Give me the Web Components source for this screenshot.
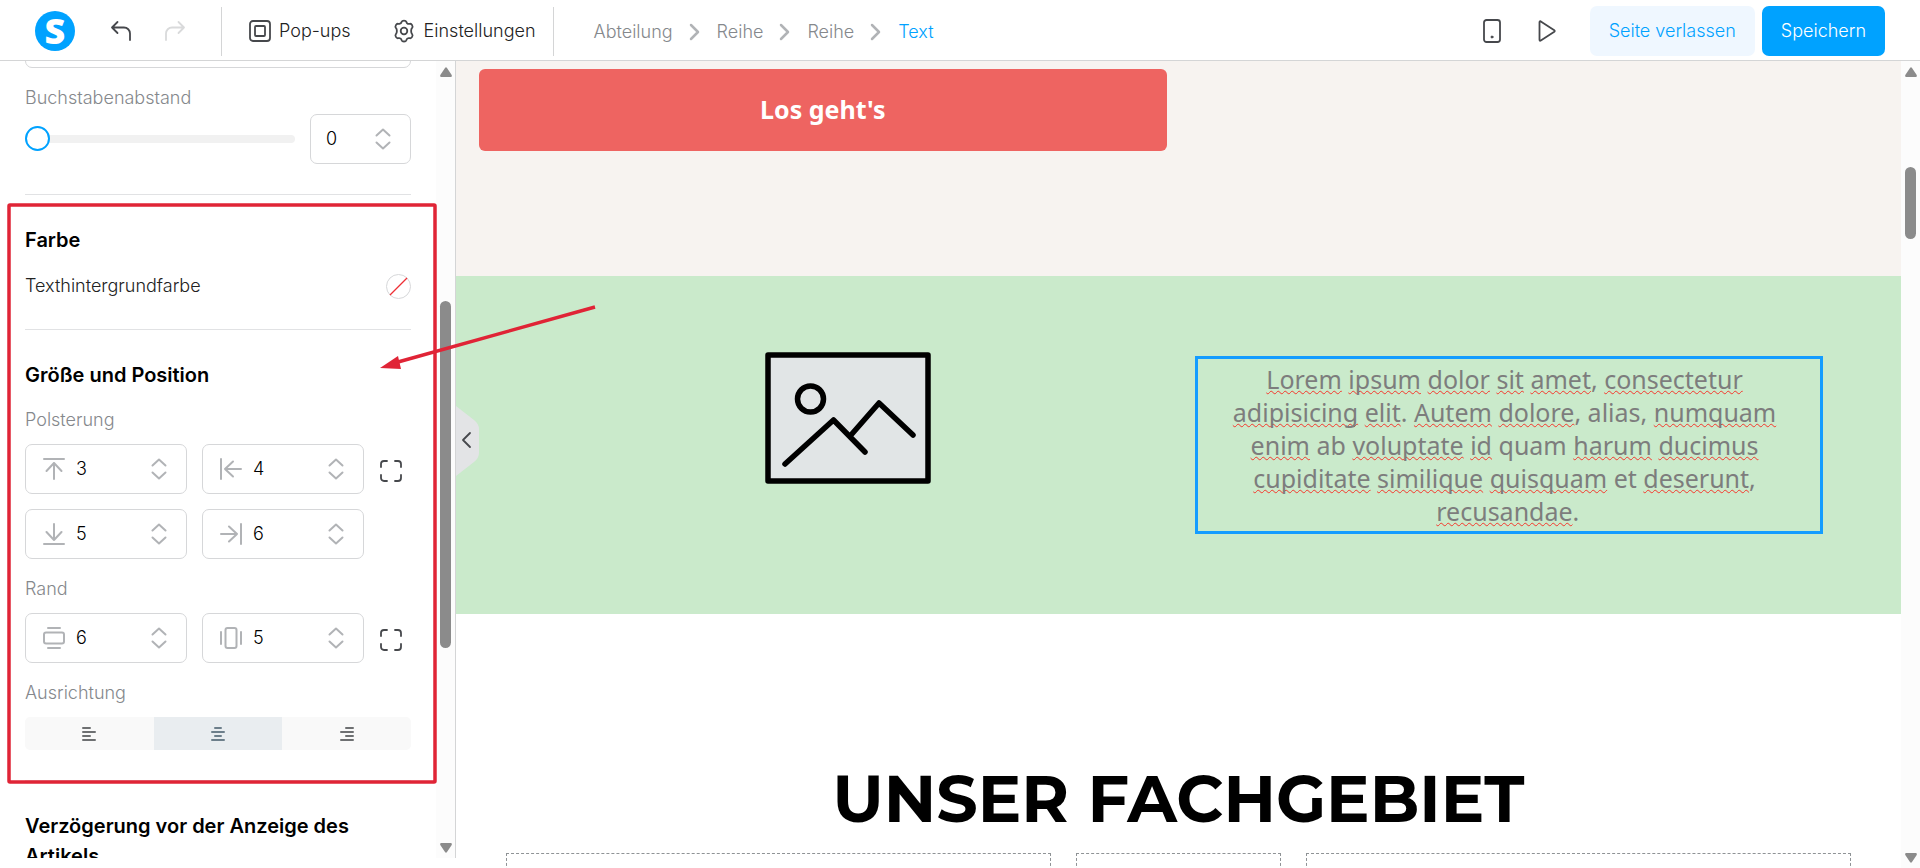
<!DOCTYPE html>
<html lang="de">
<head>
<meta charset="UTF-8">
<meta name="viewport" content="width=device-width, initial-scale=1.0">
<title>Seiteneditor</title>
<style>
	html, body {
		height: 100%;
		margin: 0;
	}

	body {
		background: #fff;
		font-family: Inter, "Liberation Sans", sans-serif;
		font-size: 18px;
		font-weight: 300;
		line-height: 20px;
		color: #222;
		overflow: hidden;
	}
</style>
</head>
<body>
<page-editor></page-editor>

<script>
/* ---------- icons ---------- */
const icons = {
	undo: [22, 22, '<path d="M7.500 2 2 7.500l5.500 5.500M2 7.500h12a6 6 0 0 1 6 6V20"/>'],
	redo: [22, 22, '<path d="M14.500 2 20 7.500 14.500 13M20 7.500H8a6 6 0 0 0-6 6V20"/>'],
	popup: [22, 22, '<rect x="1" y="1" width="20" height="20" rx="3"/><rect x="6" y="6" width="10" height="10" rx="1"/>'],
	gear: [24, 24, '<circle cx="12" cy="12" r="3.300"/><path d="M9.700 2.800c.5-1.700 4.100-1.700 4.600 0 .5 1.900 1.600 2.500 3.500 2 1.800-.5 3.600 2.600 2.300 4-1.300 1.300-1.300 5.100 0 6.400 1.300 1.400-.5 4.500-2.300 4-1.900-.5-3 .1-3.500 2-.5 1.700-4.100 1.700-4.600 0-.5-1.900-1.600-2.500-3.500-2-1.800.5-3.600-2.600-2.300-4 1.300-1.300 1.300-5.100 0-6.400-1.300-1.400.5-4.500 2.300-4 1.900.5 3-.1 3.500-2z"/>'],
	phone: [18, 24, '<rect x="1" y="1" width="16" height="22" rx="2.500"/><circle cx="9" cy="18" r="1" fill="currentColor" stroke-width="1"/>'],
	play: [18, 22, '<path d="M1.500 2.200c0-1 .6-1.200 1.300-.8l13.500 8.800c.6.400.6 1 0 1.500L2.800 20.500c-.7.500-1.300.2-1.300-.7z"/>'],
	crumb: [12, 18, '<path d="m2 2 7 7-7 7" stroke-width="2.500"/>'],
	up: [16, 9, '<path d="m1.500 7.500 6.500-6 6.500 6"/>'],
	down: [16, 9, '<path d="m1.500 1.500 6.500 6 6.500-6"/>'],
	padTop: [22, 22, '<path d="M1 1h20M11 21V5M3.500 13 11 5l7.500 8"/>'],
	padBottom: [22, 22, '<path d="M1 21h20M11 1v16M3.500 9l7.500 8 7.500-8"/>'],
	padLeft: [22, 22, '<path d="M1 1v20M21 11H5M13 3.500 5 11l8 7.500"/>'],
	padRight: [22, 22, '<path d="M21 1v20M1 11h16M9 3.500l8 7.500-8 7.500"/>'],
	marginY: [22, 22, '<path d="M5 1h12M5 21h12"/><rect x="1" y="5.500" width="20" height="11" rx="2"/>'],
	marginX: [22, 22, '<path d="M1 5v12M21 5v12"/><rect x="5.500" y="1" width="11" height="20" rx="2"/>'],
	corners: [22, 22, '<path d="M1 7V4a3 3 0 0 1 3-3h3M15 1h3a3 3 0 0 1 3 3v3M21 15v3a3 3 0 0 1-3 3h-3M7 21H4a3 3 0 0 1-3-3v-3"/>'],
	alignLeft: [14, 14, '<path d="M1 1h7M1 5h12M1 9h7M1 13h12"/>'],
	alignCenter: [14, 14, '<path d="M4 1h6M1 5h12M4 9h6M1 13h12"/>'],
	alignRight: [14, 14, '<path d="M6 1h7M1 5h12M6 9h7M1 13h12"/>']
};

class UiIcon extends HTMLElement {
	connectedCallback() {
		const [w, h, shape] = icons[this.getAttribute('name')];
		this.attachShadow({ mode: 'open' }).innerHTML = `
			<style>
				:host { display: inline-flex; flex: none; }
				svg { display: block; overflow: visible; stroke-width: var(--stroke, 1.8); }
			</style>
			<svg width="${w}" height="${h}" viewBox="0 0 ${w} ${h}" fill="none" stroke="currentColor"
				stroke-linecap="round" stroke-linejoin="round" aria-hidden="true">${shape}</svg>
		`;
	}
}
customElements.define('ui-icon', UiIcon);

/* ---------- scrollbar: before / size / after are shares of the track ---------- */
class ScrollRail extends HTMLElement {
	connectedCallback() {
		const rows = ['before', 'size', 'after'].map(n => this.getAttribute(n) + 'fr').join(' ');
		this.attachShadow({ mode: 'open' }).innerHTML = `
			<style>
				:host {
					display: flex;
					flex-direction: column;
					align-items: center;
					flex: none;
					width: 19px;
					padding: 6px 0 5px;
					box-sizing: border-box;
					background: #fcfcfc;
				}
				svg { display: block; flex: none; fill: #8b8b8b; }
				.track {
					flex: 1;
					display: grid;
					grid-template-rows: ${rows};
					width: 11px;
					margin: 4px 0 5px;
				}
				.thumb { grid-row: 2; border-radius: 6px; background: #8b8b8b; }
			</style>
			<svg width="12" height="10" viewBox="0 0 12 10"><path d="M5 1q1-1.500 2 0l4.700 7q.6 2-1 2H1.300q-1.600 0-1-2z"/></svg>
			<div class="track"><div class="thumb"></div></div>
			<svg width="12" height="10" viewBox="0 0 12 10"><path d="M5 9q1 1.500 2 0l4.700-7q.6-2-1-2H1.300q-1.600 0-1 2z"/></svg>
		`;
	}
}
customElements.define('scroll-rail', ScrollRail);

/* ---------- number field ---------- */
class NumberField extends HTMLElement {
	connectedCallback() {
		const icon = this.getAttribute('icon');
		const label = this.getAttribute('label');
		this.attachShadow({ mode: 'open' }).innerHTML = `
			<style>
				:host {
					display: flex;
					align-items: center;
					gap: 11px;
					height: 50px;
					min-width: 0;
					padding: 0 19px 0 ${icon ? 17 : 15}px;
					box-sizing: border-box;
					border: 1px solid #d6d7d9;
					border-radius: 7px;
					background: #fff;
				}
				ui-icon { --stroke: 2; color: #b1b3b6; }
				input {
					flex: 1;
					width: 0;
					min-width: 0;
					padding: 0;
					border: 0;
					outline: 0;
					background: none;
					font: inherit;
					color: #000;
					appearance: textfield;
				}
				input::-webkit-inner-spin-button { display: none; }
				.steps { display: flex; flex-direction: column; gap: 4px; }
				button { display: flex; padding: 0; border: 0; background: none; cursor: pointer; }
			</style>
			${icon ? `<ui-icon name="${icon}"></ui-icon>` : ''}
			<input type="number" value="${this.getAttribute('value')}" aria-label="${label}">
			<div class="steps">
				<button aria-label="${label} erhöhen"><ui-icon name="up"></ui-icon></button>
				<button aria-label="${label} verringern"><ui-icon name="down"></ui-icon></button>
			</div>
		`;
		const input = this.shadowRoot.querySelector('input');
		const [up, down] = this.shadowRoot.querySelectorAll('button');
		up.addEventListener('click', () => input.stepUp());
		down.addEventListener('click', () => input.stepDown());
	}
}
customElements.define('number-field', NumberField);

/* ---------- top bar ---------- */
const headerTemplate = document.createElement('template');
headerTemplate.innerHTML = `
	<style>
		:host {
			display: flex;
			align-items: center;
			flex: none;
			height: 61px;
			padding: 2px 35px 0;
			box-sizing: border-box;
			border-bottom: 1px solid #d4d5d6;
			background: #fff;
		}

		button {
			display: flex;
			align-items: center;
			padding: 0;
			border: 0;
			background: none;
			font: inherit;
			color: #222;
			cursor: pointer;
		}

		ui-icon {
			color: #46484c;
		}

		.logo {
			display: flex;
			align-items: center;
			justify-content: center;
			width: 40px;
			height: 40px;
			border-radius: 50%;
			background: #00a2ff;
			font: 800 36px/40px "Open Sans", sans-serif;
			color: #fff;
			text-decoration: none;
		}

		.history {
			display: flex;
			gap: 32px;
			padding: 0 35px;
		}

		.history button:disabled ui-icon {
			color: #d9dadb;
		}

		.tools {
			display: flex;
			align-items: center;
			gap: 41px;
			height: 49px;
			padding: 0 17px 0 27px;
			border: solid #d4d5d6;
			border-width: 0 1px;
		}

		.tools button {
			gap: 8px;
		}

		nav {
			display: flex;
			align-items: center;
			gap: 16px;
			padding: 2px 40px 0;
		}

		nav a {
			color: #85888c;
			text-decoration: none;
		}

		nav a[aria-current] {
			color: #00a2ff;
		}

		nav ui-icon {
			color: #b1b3b6;
		}

		.actions {
			display: flex;
			align-items: center;
			gap: 7px;
			margin-left: auto;
		}

		.preview {
			display: flex;
			align-items: center;
			gap: 37px;
			margin-right: 27px;
		}

		.leave,
		.save {
			height: 50px;
			padding: 0 19px;
			border-radius: 7px;
			background: #eff7ff;
			color: #00a2ff;
		}

		.save {
			background: #00a2ff;
			color: #fff;
		}
	</style>

	<a href="#" class="logo" aria-label="Startseite">S</a>
	<div class="history">
		<button aria-label="Rückgängig"><ui-icon name="undo"></ui-icon></button>
		<button aria-label="Wiederholen" disabled><ui-icon name="redo"></ui-icon></button>
	</div>
	<div class="tools">
		<button><ui-icon name="popup"></ui-icon>Pop-ups</button>
		<button><ui-icon name="gear"></ui-icon>Einstellungen</button>
	</div>
	<nav>
		<a href="#">Abteilung</a>
		<ui-icon name="crumb"></ui-icon>
		<a href="#">Reihe</a>
		<ui-icon name="crumb"></ui-icon>
		<a href="#">Reihe</a>
		<ui-icon name="crumb"></ui-icon>
		<a href="#" aria-current="page">Text</a>
	</nav>
	<div class="actions">
		<div class="preview">
			<button aria-label="Mobile Ansicht"><ui-icon name="phone"></ui-icon></button>
			<button aria-label="Vorschau"><ui-icon name="play"></ui-icon></button>
		</div>
		<button class="leave">Seite verlassen</button>
		<button class="save">Speichern</button>
	</div>
`;

class EditorHeader extends HTMLElement {
	connectedCallback() {
		this.attachShadow({ mode: 'open' })
			.appendChild(headerTemplate.content.cloneNode(true));
	}
}
customElements.define('editor-header', EditorHeader);

/* ---------- settings section ---------- */
const sectionTemplate = document.createElement('template');
sectionTemplate.innerHTML = `
	<style>
		:host {
			display: block;
			padding: 30px 0;
			border-top: 1px solid #e1e2e4;
		}

		h2 {
			margin: 0;
			font-size: 20px;
			font-weight: 600;
			line-height: 30px;
			color: #000;
		}
	</style>
	<h2><slot name="title"></slot></h2>
	<slot></slot>
`;

class SettingsSection extends HTMLElement {
	connectedCallback() {
		this.attachShadow({ mode: 'open' })
			.appendChild(sectionTemplate.content.cloneNode(true));
	}
}
customElements.define('settings-section', SettingsSection);

/* ---------- left panel ---------- */
const sidebarTemplate = document.createElement('template');
sidebarTemplate.innerHTML = `
	<style>
		:host {
			display: flex;
			flex: none;
			width: 456px;
			margin-bottom: 10px;
			box-sizing: border-box;
			border-right: 1px solid #d4d5d6;
			background: #fff;
			overflow: hidden;
		}

		.panel {
			flex: 1;
			min-width: 0;
			padding: 0 25px;
			overflow: hidden;
		}

		/* field scrolled out at the top, only its lower edge stays visible */
		.previous {
			height: 50px;
			margin-top: -43px;
			box-sizing: border-box;
			border: 1px solid #d6d7d9;
			border-radius: 7px;
		}

		.label {
			display: block;
			margin: 20px 0 14px;
			color: #85888c;
		}

		.spacing .label {
			margin-bottom: 6px;
		}

		.spacing {
			padding-bottom: 30px;
		}

		.slider {
			display: flex;
			align-items: center;
			gap: 15px;
		}

		.slider number-field {
			width: 101px;
		}

		input[type="range"] {
			flex: 1;
			min-width: 0;
			height: 26px;
			margin: 0;
			appearance: none;
			background: none;
		}

		input[type="range"]::-webkit-slider-runnable-track {
			height: 8px;
			border-radius: 4px;
			background: #f1f1f1;
		}

		input[type="range"]::-webkit-slider-thumb {
			appearance: none;
			width: 25px;
			height: 25px;
			margin-top: -9px;
			box-sizing: border-box;
			border: 2px solid #00a2ff;
			border-radius: 50%;
			background: #fff;
		}

		.color {
			display: flex;
			align-items: center;
			justify-content: space-between;
			height: 26px;
			margin-top: 18px;
		}

		.swatch {
			display: flex;
			padding: 0;
			border: 0;
			background: none;
		}

		.fields {
			display: grid;
			grid-template-columns: 1fr 1fr 32px;
			gap: 15px;
		}

		.link {
			display: flex;
			align-items: center;
			padding: 4px 0 0 1px;
			border: 0;
			background: none;
			color: #46484c;
		}

		.align {
			display: flex;
			height: 33px;
			border-radius: 5px;
			background: #f9f9f9;
			overflow: hidden;
		}

		.align button {
			--stroke: 2;
			flex: 1;
			display: flex;
			align-items: center;
			justify-content: center;
			border: 0;
			background: none;
			color: #6e7072;
		}

		.align button[aria-pressed="true"] {
			background: #e9edf0;
			color: #6d7f8b;
		}
	</style>

	<div class="panel">
		<div class="previous"></div>
		<div class="spacing">
			<label class="label" for="spacing">Buchstabenabstand</label>
			<div class="slider">
				<input type="range" id="spacing" min="0" max="20" value="0">
				<number-field value="0" label="Buchstabenabstand"></number-field>
			</div>
		</div>

		<settings-section>
			<span slot="title">Farbe</span>
			<div class="color">
				<span id="bg">Texthintergrundfarbe</span>
				<button class="swatch" aria-labelledby="bg">
					<svg width="25" height="25" viewBox="0 0 25 25" fill="none">
						<circle cx="12.500" cy="12.500" r="12" fill="#fff" stroke="#d6d7d9"/>
						<path d="M4 21 21 4" stroke="#ee2f35" stroke-width="1.300"/>
					</svg>
				</button>
			</div>
		</settings-section>

		<settings-section>
			<span slot="title">Größe und Position</span>
			<span class="label">Polsterung</span>
			<div class="fields">
				<number-field icon="padTop" value="3" label="Polsterung oben"></number-field>
				<number-field icon="padLeft" value="4" label="Polsterung links"></number-field>
				<button class="link" aria-label="Polsterung verknüpfen"><ui-icon name="corners"></ui-icon></button>
				<number-field icon="padBottom" value="5" label="Polsterung unten"></number-field>
				<number-field icon="padRight" value="6" label="Polsterung rechts"></number-field>
			</div>
			<span class="label">Rand</span>
			<div class="fields">
				<number-field icon="marginY" value="6" label="Rand vertikal"></number-field>
				<number-field icon="marginX" value="5" label="Rand horizontal"></number-field>
				<button class="link" aria-label="Rand verknüpfen"><ui-icon name="corners"></ui-icon></button>
			</div>
			<span class="label">Ausrichtung</span>
			<div class="align">
				<button aria-label="Links" aria-pressed="false"><ui-icon name="alignLeft"></ui-icon></button>
				<button aria-label="Zentriert" aria-pressed="true"><ui-icon name="alignCenter"></ui-icon></button>
				<button aria-label="Rechts" aria-pressed="false"><ui-icon name="alignRight"></ui-icon></button>
			</div>
		</settings-section>

		<settings-section>
			<span slot="title">Verzögerung vor der Anzeige des Artikels</span>
		</settings-section>
	</div>
	<scroll-rail before="220" size="347" after="190"></scroll-rail>
`;

class SettingsSidebar extends HTMLElement {
	connectedCallback() {
		this.attachShadow({ mode: 'open' })
			.appendChild(sidebarTemplate.content.cloneNode(true));
	}
}
customElements.define('settings-sidebar', SettingsSidebar);

/* ---------- page preview ---------- */
const canvasTemplate = document.createElement('template');
canvasTemplate.innerHTML = `
	<style>
		:host {
			display: flex;
			flex: 1;
			min-width: 0;
			position: relative;
			overflow: hidden;
			font-family: "Noto Sans", sans-serif;
			font-weight: 400;
		}

		.page {
			flex: 1;
			min-width: 0;
			overflow: hidden;
		}

		.hero {
			display: grid;
			grid-template-columns: 1fr 1fr;
			gap: 25px;
			padding: 8px 22px 125px 23px;
			background: #f7f3f0;
		}

		.cta {
			padding: 23px 24px 25px;
			border-radius: 6px;
			background: #ee6461;
			font-size: 25px;
			font-weight: 700;
			line-height: 34px;
			color: #fff;
			text-align: center;
			text-decoration: none;
		}

		.intro {
			display: grid;
			grid-template-columns: 12fr 11fr;
			align-items: start;
			gap: 4px;
			padding: 76px 78px 80px 49px;
			background: #caeacb;
		}

		.intro svg {
			display: block;
			justify-self: center;
		}

		.intro p {
			margin: 4px 0 0;
			padding: 4px 32px 3px 30px;
			border: 3px solid #149dff;
			font-size: 25px;
			line-height: 33px;
			color: #7d7d7d;
			text-align: center;
			white-space: break-spaces;
		}

		.intro u {
			text-decoration: underline wavy 1px #f5372c;
			text-decoration-skip-ink: none;
			text-underline-offset: 1px;
		}

		.topics {
			padding: 145px 50px 0;
			background: #fff;
		}

		h1 {
			margin: 0 0 14px;
			font: 700 65px/80px Montserrat, Inter, sans-serif;
			color: #000;
			text-align: center;
		}

		.cards {
			display: grid;
			grid-template-columns: 8fr 3fr 8fr;
			gap: 25px;
		}

		.cards div {
			height: 200px;
			border: 1px dashed #8f9396;
		}

		/* handle that lies over the preview's left edge */
		.collapse {
			position: absolute;
			left: 0;
			top: 345px;
			padding: 0;
			border: 0;
			background: none;
			color: #46484c;
		}

		.collapse svg {
			display: block;
		}
	</style>

	<div class="page">
		<section class="hero">
			<a href="#" class="cta">Los geht's</a>
		</section>
		<section class="intro">
			<svg width="166" height="132" viewBox="0 0 166 132" fill="none" stroke="#000" stroke-width="5.500" stroke-linecap="round" stroke-linejoin="round">
				<rect x="3" y="3" width="160" height="126" fill="#e1e5e6"/>
				<circle cx="45.500" cy="47" r="13"/>
				<path d="M20 112 68.500 68 100 100M86 83l28-32 34 32"/>
			</svg>
			<p><u>Lorem</u> <u>ipsum</u> <u>dolor</u> <u>sit</u> <u>amet</u>, <u>consectetur</u> <u>adipisicing</u> <u>elit</u>. <u>Autem</u> <u>dolore</u>, alias, <u>numquam</u> <u>enim</u> ab <u>voluptate</u> <u>id</u> quam <u>harum</u> <u>ducimus</u> <u>cupiditate</u> <u>similique</u> <u>quisquam</u> et <u>deserunt</u>, <u>recusandae</u>.</p>
		</section>
		<section class="topics">
			<h1>UNSER FACHGEBIET</h1>
			<div class="cards"><div></div><div></div><div></div></div>
		</section>
	</div>
	<scroll-rail before="86" size="72" after="609"></scroll-rail>
	<button class="collapse" aria-label="Leiste einklappen">
		<svg width="23" height="70" viewBox="0 0 23 70" fill="none">
			<path d="M0 0 18 14q5 4 5 9v24q0 5-5 9L0 70z" fill="#e3e4e6"/>
			<path d="m14 27-7 7 7 7" stroke="currentColor" stroke-width="1.800" stroke-linecap="round" stroke-linejoin="round"/>
		</svg>
	</button>
`;

class PageCanvas extends HTMLElement {
	connectedCallback() {
		this.attachShadow({ mode: 'open' })
			.appendChild(canvasTemplate.content.cloneNode(true));
	}
}
customElements.define('page-canvas', PageCanvas);

/* ---------- red frame and arrow drawn over the editor ---------- */
class MarkerOverlay extends HTMLElement {
	connectedCallback() {
		this.attachShadow({ mode: 'open' }).innerHTML = `
			<style>
				:host {
					display: block;
					position: absolute;
					left: 0;
					top: 0;
					pointer-events: none;
				}
				svg { display: block; }
			</style>
			<svg width="620" height="800" viewBox="0 0 620 800" fill="none" stroke="#e02436" stroke-width="3.500" aria-hidden="true">
				<rect x="9" y="205" width="426" height="577" rx="1"/>
				<path d="M595 307 398 362"/>
				<path d="m380 368 18-12 3 13z" fill="#e02436" stroke="none"/>
			</svg>
		`;
	}
}
customElements.define('marker-overlay', MarkerOverlay);

/* ---------- page ---------- */
const editorTemplate = document.createElement('template');
editorTemplate.innerHTML = `
	<style>
		:host {
			display: flex;
			flex-direction: column;
			height: 100%;
			position: relative;
		}

		main {
			flex: 1;
			display: flex;
			min-height: 0;
		}
	</style>
	<editor-header></editor-header>
	<main>
		<settings-sidebar></settings-sidebar>
		<page-canvas></page-canvas>
	</main>
	<marker-overlay></marker-overlay>
`;

class PageEditor extends HTMLElement {
	connectedCallback() {
		this.attachShadow({ mode: 'open' })
			.appendChild(editorTemplate.content.cloneNode(true));
	}
}
customElements.define('page-editor', PageEditor);
</script>
</body>
</html>
